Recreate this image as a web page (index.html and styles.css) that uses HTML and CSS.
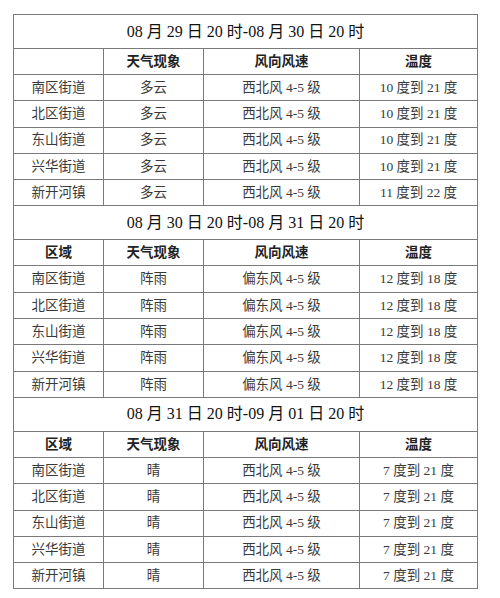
FILE: index.html
```html
<!DOCTYPE html>
<html lang="zh">
<head>
<meta charset="utf-8">
<link rel="stylesheet" href="styles.css">
</head>
<body>
<table class="wx">
<colgroup><col class="c1"><col class="c2"><col class="c3"><col class="c4"></colgroup>
<tr class="title"><td colspan="4">08 月 29 日 20 时-08 月 30 日 20 时</td></tr>
<tr class="head"><td></td><td>天气现象</td><td>风向风速</td><td>温度</td></tr>
<tr><td>南区街道</td><td>多云</td><td>西北风 4-5 级</td><td>10 度到 21 度</td></tr>
<tr><td>北区街道</td><td>多云</td><td>西北风 4-5 级</td><td>10 度到 21 度</td></tr>
<tr><td>东山街道</td><td>多云</td><td>西北风 4-5 级</td><td>10 度到 21 度</td></tr>
<tr><td>兴华街道</td><td>多云</td><td>西北风 4-5 级</td><td>10 度到 21 度</td></tr>
<tr><td>新开河镇</td><td>多云</td><td>西北风 4-5 级</td><td>11 度到 22 度</td></tr>
<tr class="title"><td colspan="4">08 月 30 日 20 时-08 月 31 日 20 时</td></tr>
<tr class="head"><td>区域</td><td>天气现象</td><td>风向风速</td><td>温度</td></tr>
<tr><td>南区街道</td><td>阵雨</td><td>偏东风 4-5 级</td><td>12 度到 18 度</td></tr>
<tr><td>北区街道</td><td>阵雨</td><td>偏东风 4-5 级</td><td>12 度到 18 度</td></tr>
<tr><td>东山街道</td><td>阵雨</td><td>偏东风 4-5 级</td><td>12 度到 18 度</td></tr>
<tr><td>兴华街道</td><td>阵雨</td><td>偏东风 4-5 级</td><td>12 度到 18 度</td></tr>
<tr><td>新开河镇</td><td>阵雨</td><td>偏东风 4-5 级</td><td>12 度到 18 度</td></tr>
<tr class="title"><td colspan="4">08 月 31 日 20 时-09 月 01 日 20 时</td></tr>
<tr class="head"><td>区域</td><td>天气现象</td><td>风向风速</td><td>温度</td></tr>
<tr><td>南区街道</td><td>晴</td><td>西北风 4-5 级</td><td>7 度到 21 度</td></tr>
<tr><td>北区街道</td><td>晴</td><td>西北风 4-5 级</td><td>7 度到 21 度</td></tr>
<tr><td>东山街道</td><td>晴</td><td>西北风 4-5 级</td><td>7 度到 21 度</td></tr>
<tr><td>兴华街道</td><td>晴</td><td>西北风 4-5 级</td><td>7 度到 21 度</td></tr>
<tr><td>新开河镇</td><td>晴</td><td>西北风 4-5 级</td><td>7 度到 21 度</td></tr>
</table>
</body>
</html>
```
FILE: styles.css
```css
html, body { margin: 0; padding: 0; background: #fff; }
body { padding: 14px 0 0 13px; }
.wx {
  border-collapse: collapse;
  width: 464px;
  table-layout: fixed;
  font-family: "Liberation Serif", "Noto Sans CJK SC", serif;
  color: #3a3a3a;
  font-size: 13.5px;
}
.c1 { width: 90px; }
.c2 { width: 100px; }
.c3 { width: 156px; }
.c4 { width: 118px; }
.wx td {
  border: 1px solid #7a7a7a;
  text-align: center;
  padding: 0;
  height: 25.3px;
  line-height: 1;
}
.wx .title td {
  height: 33px;
  font-size: 16px;
  color: #111;
}
.wx .head td {
  height: 25px;
  font-weight: bold;
  color: #222;
}
```
